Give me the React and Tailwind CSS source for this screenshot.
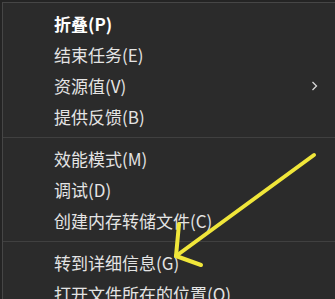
const groups = [
  [
    { label: '折叠(P)', bold: true },
    { label: '结束任务(E)' },
    { label: '资源值(V)', submenu: true },
    { label: '提供反馈(B)' },
  ],
  [
    { label: '效能模式(M)' },
    { label: '调试(D)' },
    { label: '创建内存转储文件(C)' },
  ],
  [
    { label: '转到详细信息(G)' },
    { label: '打开文件所在的位置(O)' },
  ],
];

const MenuRow = ({ item }) => (
  <div className="h-[31px] flex items-center pl-[51px] pr-[17px]">
    <span
      className={`flex-1 text-[17px] leading-none whitespace-nowrap ${
        item.bold ? 'font-bold text-white' : 'text-[#e4e4e4]'
      }`}
    >
      {item.label}
    </span>
    {item.submenu && (
      <svg width="7" height="10" viewBox="0 0 7 10" className="text-[#d8d8d8]">
        <polyline points="1.5,1 5.5,5 1.5,9" fill="none" stroke="currentColor" strokeWidth="1.3" />
      </svg>
    )}
  </div>
);

export default function App() {
  return (
    <div
      className="relative w-[335px] h-[299px] overflow-hidden bg-[#242424] pl-[2px] pt-[2px]"
      style={{ fontFamily: '"Noto Sans CJK SC", "Noto Sans", sans-serif' }}
    >
      <div className="h-full bg-[#2b2b2b] border-l border-t border-[#464646] pt-[5px]">
        {groups.map((group, gi) => (
          <div key={gi}>
            {gi > 0 && <div className="h-px bg-[#404040] my-[5px]" />}
            {group.map((item) => (
              <MenuRow key={item.label} item={item} />
            ))}
          </div>
        ))}
      </div>

      {/* yellow annotation arrow */}
      <svg className="absolute inset-0 pointer-events-none" width="335" height="299" viewBox="0 0 335 299">
        <g stroke="#f0e63a" strokeWidth="4" strokeLinecap="round" fill="none">
          <line x1="314" y1="155" x2="176" y2="256" />
          <line x1="176" y1="256" x2="179" y2="224" />
          <line x1="176" y1="256" x2="201" y2="265" />
        </g>
      </svg>
    </div>
  );
}
